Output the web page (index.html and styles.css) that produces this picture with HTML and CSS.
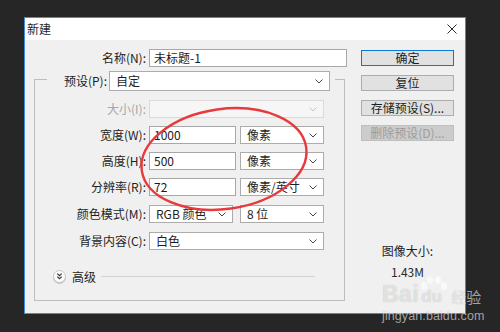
FILE: index.html
```html
<!DOCTYPE html>
<html lang="zh">
<head>
<meta charset="utf-8">
<title>新建</title>
<link rel="stylesheet" href="styles.css">
</head>
<body>
<div class="desk">
  <div class="dialog">
    <div class="titlebar">
      <span class="title">新建</span>
      <svg class="close" viewBox="0 0 10 10" width="10" height="10"><path d="M0.5 0.5L9.5 9.5M9.5 0.5L0.5 9.5" stroke="#2a2a2a" stroke-width="1" fill="none"/></svg>
    </div>
    <div class="body">
      <div class="main">
        <div class="row name-row">
          <span class="lbl">名称(N):</span>
          <div class="field name-field">未标题-1</div>
        </div>
        <fieldset class="group">
          <legend class="preset">
            <div class="preset-inner">
              <span class="plbl">预设(P):</span>
              <div class="combo preset-combo"><span>自定</span><svg class="chev" viewBox="0 0 8 5" width="8" height="5"><path d="M0.5 0.5L4 4L7.5 0.5" fill="none" stroke="#444" stroke-width="1"/></svg></div>
            </div>
          </legend>
          <div class="row">
            <span class="lbl disabled">大小(I):</span>
            <div class="combo wide disabled"><span></span><svg class="chev" viewBox="0 0 8 5" width="8" height="5"><path d="M0.5 0.5L4 4L7.5 0.5" fill="none" stroke="#c4c4c4" stroke-width="1"/></svg></div>
          </div>
          <div class="row gap8">
            <span class="lbl">宽度(W):</span>
            <div class="field num">1000</div>
            <div class="combo unit"><span>像素</span><svg class="chev" viewBox="0 0 8 5" width="8" height="5"><path d="M0.5 0.5L4 4L7.5 0.5" fill="none" stroke="#444" stroke-width="1"/></svg></div>
          </div>
          <div class="row gap8">
            <span class="lbl">高度(H):</span>
            <div class="field num">500</div>
            <div class="combo unit"><span>像素</span><svg class="chev" viewBox="0 0 8 5" width="8" height="5"><path d="M0.5 0.5L4 4L7.5 0.5" fill="none" stroke="#444" stroke-width="1"/></svg></div>
          </div>
          <div class="row gap8">
            <span class="lbl">分辨率(R):</span>
            <div class="field num">72</div>
            <div class="combo unit"><span>像素/英寸</span><svg class="chev" viewBox="0 0 8 5" width="8" height="5"><path d="M0.5 0.5L4 4L7.5 0.5" fill="none" stroke="#444" stroke-width="1"/></svg></div>
          </div>
          <div class="row gap9">
            <span class="lbl">颜色模式(M):</span>
            <div class="combo mode"><span>RGB 颜色</span><svg class="chev" viewBox="0 0 8 5" width="8" height="5"><path d="M0.5 0.5L4 4L7.5 0.5" fill="none" stroke="#444" stroke-width="1"/></svg></div>
            <div class="combo unit"><span>8 位</span><svg class="chev" viewBox="0 0 8 5" width="8" height="5"><path d="M0.5 0.5L4 4L7.5 0.5" fill="none" stroke="#444" stroke-width="1"/></svg></div>
          </div>
          <div class="row gap9">
            <span class="lbl">背景内容(C):</span>
            <div class="combo wide"><span>白色</span><svg class="chev" viewBox="0 0 8 5" width="8" height="5"><path d="M0.5 0.5L4 4L7.5 0.5" fill="none" stroke="#444" stroke-width="1"/></svg></div>
          </div>
          <div class="advanced">
            <svg class="adv-btn" viewBox="0 0 13 13" width="13" height="13">
              <circle cx="6.5" cy="6.5" r="6" fill="#fbfbfb" stroke="#c6c6c6" stroke-width="1"/>
              <path d="M4.3 3.6L6.5 5.6L8.7 3.6M4.3 6.6L6.5 8.6L8.7 6.6" fill="none" stroke="#333" stroke-width="1.2"/>
            </svg>
            <span class="adv-text">高级</span>
            <span class="adv-line"></span>
          </div>
        </fieldset>
      </div>
      <div class="side">
        <div class="btn default">确定</div>
        <div class="btn">复位</div>
        <div class="btn">存储预设(S)...</div>
        <div class="btn disabled">删除预设(D)...</div>
        <div class="imgsize">
          <div>图像大小:</div>
          <div class="size-val">1.43M</div>
        </div>
      </div>
    </div>
  </div>
</div>
<svg class="mark" viewBox="0 0 500 332" width="500" height="332">
  <ellipse cx="224" cy="159" rx="83" ry="50" transform="rotate(-8 224 159)" fill="none" stroke="#e83a3c" stroke-width="2.4"/>
</svg>
<div class="watermark">
  <div class="wm-logo">
    <span class="wm-bai">Bai</span><span class="wm-du"><svg class="paw" viewBox="0 0 30 22" width="30" height="22">
      <ellipse cx="5" cy="10" rx="3" ry="4" fill="rgba(255,255,255,0.62)"/>
      <ellipse cx="11" cy="4" rx="3" ry="3.8" fill="rgba(255,255,255,0.62)"/>
      <ellipse cx="19" cy="4" rx="3" ry="3.8" fill="rgba(255,255,255,0.62)"/>
      <ellipse cx="25" cy="10" rx="3" ry="4" fill="rgba(255,255,255,0.62)"/>
    </svg><span class="du">du</span></span><span class="wm-jy">经验</span>
  </div>
  <div class="wm-url">jingyan.baidu.com</div>
</div>
</body>
</html>
```

FILE: styles.css
```css
* { box-sizing: border-box; }
html, body { margin: 0; padding: 0; }
body {
  width: 500px;
  height: 332px;
  overflow: hidden;
  position: relative;
  background: #262626;
  font-family: "Noto Sans CJK SC", "Microsoft YaHei", sans-serif;
  font-size: 12px;
  color: #1e1e1e;
}
.desk { padding: 17px 0 0 24px; }
.dialog {
  width: 442px;
  height: 297px;
  border: 1px solid #3d8ee0;
  background: #f0f0f0;
  display: flex;
  flex-direction: column;
}
.titlebar {
  height: 22px;
  background: #fff;
  display: flex;
  align-items: center;
  justify-content: space-between;
  padding: 0 8px 0 2px;
  flex: none;
}
.title { line-height: 16px; }
.close { display: block; margin-top: -1px; }
.body { display: flex; flex: 1; }
.main { width: 323px; padding: 9px 0 0 9px; flex: none; }
.row { display: flex; align-items: center; height: 18px; }
.lbl {
  width: 111px;
  margin-right: 3px;
  text-align: right;
  white-space: nowrap;
  line-height: 16px;
  flex: none;
}
.lbl.disabled { color: #a6a6a6; }
.name-row .lbl { width: 112px; }
.field {
  height: 18px;
  border: 1px solid #a7a7a7;
  background: #fff;
  padding-left: 4px;
  line-height: 16px;
  flex: none;
  color: #1a1a1a;
}
.name-field { width: 198px; }
.num { width: 87px; margin-right: 4px; }
.combo {
  height: 18px;
  border: 1px solid #acacac;
  background: #fff;
  display: flex;
  align-items: center;
  padding: 0 6px 0 6px;
  line-height: 16px;
  flex: none;
  white-space: nowrap;
}
.combo .chev { margin-left: auto; display: block; }
.combo.disabled { background: #f6f6f6; border-color: #dadada; }
.wide { width: 175px; }
.unit { width: 84px; }
.mode { width: 84px; margin-right: 7px; }
.group {
  margin: 0;
  width: 311px;
  min-width: 0;
  border: 1px solid #bdbdbd;
  padding: 9px 0 17px 0;
}
.preset { margin-left: 12px; padding: 4px 5px 0 0; }
.preset-inner { display: flex; align-items: center; }
.plbl { width: 60px; margin-right: 2px; text-align: right; white-space: nowrap; line-height: 16px; }
.preset-combo { width: 221px; height: 20px; }
.gap8 { margin-top: 8px; }
.gap9 { margin-top: 9px; }
.advanced {
  display: flex;
  align-items: center;
  height: 13px;
  margin-top: 20px;
  padding-left: 18px;
}
.adv-btn { display: block; flex: none; filter: drop-shadow(0 1px 0.5px rgba(0,0,0,0.18)); }
.adv-text { margin-left: 6px; line-height: 14px; }
.adv-line { flex: 1; height: 1px; background: #d2d2d2; margin: 0 29px 0 5px; }
.side {
  width: 93px;
  margin-left: 13px;
  padding-top: 10px;
  display: flex;
  flex-direction: column;
}
.btn {
  height: 16px;
  border: 1px solid #adadad;
  background: #e1e1e1;
  text-align: center;
  line-height: 14px;
  margin-bottom: 9px;
  white-space: nowrap;
}
.btn.default { border-color: #0a78d4; box-shadow: inset 0 0 0 1px #e1e1e1; }
.btn.disabled { background: #cccccc; border-color: #bfbfbf; color: #9c9c9c; }
.imgsize { margin-top: 93px; text-align: center; line-height: 16px; }
.size-val { margin-top: 5px; color: #2a2a2a; }
.mark { position: absolute; left: 0; top: 0; pointer-events: none; }
.watermark {
  position: absolute;
  left: 382px;
  top: 280px;
  color: rgba(255,255,255,0.6);
  font-family: "Liberation Sans", Arial, sans-serif;
  text-shadow: 0 0 1px rgba(0,0,0,0.25);
  pointer-events: none;
}
.wm-logo { display: flex; align-items: flex-end; height: 26px; }
.wm-bai { font-size: 23px; font-weight: bold; line-height: 24px; letter-spacing: 0.5px; }
.wm-du { position: relative; display: inline-block; width: 30px; height: 26px; }
.paw { position: absolute; left: 0; top: -4px; }
.du {
  position: absolute;
  left: 2px;
  bottom: 1px;
  font-size: 17px;
  font-weight: bold;
  line-height: 17px;
}
.wm-jy { font-family: "Noto Sans CJK SC", sans-serif; font-size: 15px; line-height: 18px; margin-left: 2px; }
.wm-url { font-size: 12.5px; line-height: 14px; margin-top: 3px; letter-spacing: 0.1px; }
```
